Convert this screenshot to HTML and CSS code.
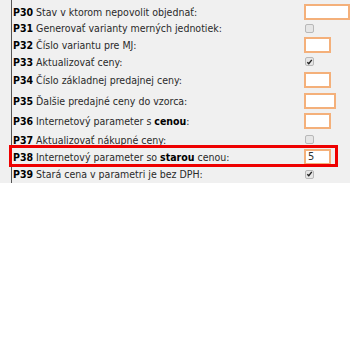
FILE: index.html
```html
<!DOCTYPE html>
<html>
<head>
<meta charset="utf-8">
<link rel="stylesheet" href="styles.css">
</head>
<body>
<div class="panel">
  <div class="row h17"><span class="label"><b>P30</b> Stav v ktorom nepovolit objednať:</span><span class="ctl"><span class="inp wide"></span></span></div>
  <div class="row h16"><span class="label"><b>P31</b> Generovať varianty merných jednotiek:</span><span class="ctl"><span class="cb"></span></span></div>
  <div class="row h17"><span class="label"><b>P32</b> Číslo variantu pre MJ:</span><span class="ctl"><span class="inp"></span></span></div>
  <div class="row h17"><span class="label"><b>P33</b> Aktualizovať ceny:</span><span class="ctl"><span class="cb"><svg viewBox="0 0 8 8" width="8" height="8"><path d="M1.5 4.2 L3.2 6 L6.6 1.6" fill="none" stroke="#222" stroke-width="1.6"/></svg></span></span></div>
  <div class="row h20"><span class="label"><b>P34</b> Číslo základnej predajnej ceny:</span><span class="ctl"><span class="inp"></span></span></div>
  <div class="row h21"><span class="label"><b>P35</b> Ďalšie predajné ceny do vzorca:</span><span class="ctl"><span class="inp mid"></span></span></div>
  <div class="row h20"><span class="label"><b>P36</b> Internetový parameter s <b>cenou</b>:</span><span class="ctl"><span class="inp"></span></span></div>
  <div class="row h17"><span class="label"><b>P37</b> Aktualizovať nákupné ceny:</span><span class="ctl"><span class="cb"></span></span></div>
  <div class="row h17 hl"><span class="label"><b>P38</b> Internetový parameter so <b>starou</b> cenou:</span><span class="ctl"><span class="inp">5</span></span></div>
  <div class="row h18"><span class="label"><b>P39</b> Stará cena v parametri je bez DPH:</span><span class="ctl"><span class="cb"><svg viewBox="0 0 8 8" width="8" height="8"><path d="M1.5 4.2 L3.2 6 L6.6 1.6" fill="none" stroke="#222" stroke-width="1.6"/></svg></span></span></div>
</div>
</body>
</html>
```
FILE: styles.css
```css
html, body {
  margin: 0;
  padding: 0;
  background: #ffffff;
}
.panel {
  background: #f0f0f0;
  padding: 3px 0 0 0;
  height: 180px;
  position: relative;
  font-family: "DejaVu Sans Condensed", "DejaVu Sans", sans-serif;
  font-size: 10.5px;
  color: #2a2a2a;
}
.panel::before {
  content: "";
  position: absolute;
  left: 11px;
  top: 0;
  bottom: 0;
  width: 1px;
  background: #555;
}
.row {
  display: flex;
  align-items: center;
  position: relative;
}
.h16 { height: 16px; }
.h17 { height: 17px; }
.h18 { height: 18px; }
.h20 { height: 20px; }
.h21 { height: 21px; }
.label {
  flex: 1;
  padding-left: 13px;
  white-space: nowrap;
}
.label b {
  color: #000;
}
.ctl {
  width: 46px;
  display: flex;
  align-items: center;
}
.inp {
  box-sizing: border-box;
  width: 27px;
  height: 16px;
  background: #fff;
  border: 2px solid #f4b07a;
  font-size: 11px;
  line-height: 12px;
  padding-left: 2px;
  color: #333;
}
.inp.wide { width: 50px; }
.inp.mid { width: 32px; }
.cb {
  box-sizing: border-box;
  width: 9px;
  height: 9px;
  margin-left: 1px;
  border: 1px solid #b8b8b8;
  border-radius: 2px;
  background: #e6e6e6;
  display: flex;
  align-items: center;
  justify-content: center;
}
.hl::after {
  content: "";
  position: absolute;
  left: 9px;
  top: -3px;
  width: 329px;
  height: 22px;
  box-sizing: border-box;
  border: 3px solid #ee0000;
}
```
